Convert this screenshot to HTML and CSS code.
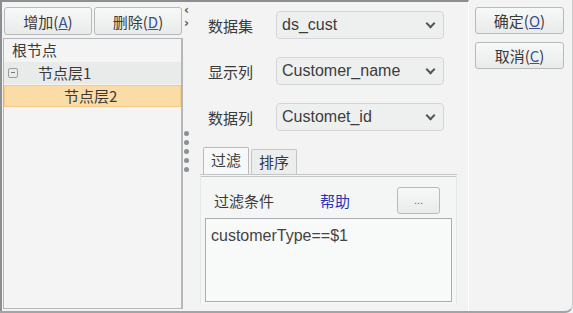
FILE: index.html
```html
<!DOCTYPE html>
<html lang="zh-CN">
<head>
  <meta charset="UTF-8">
  <title>树节点设置</title>
  <link rel="stylesheet" href="styles.css">
</head>
<body>

<div class="frame">
  <div class="main">
    <!-- 左侧：节点树 -->
    <div class="left">
      <div class="btn-row">
        <button class="btn">增加(<u>A</u>)</button>
        <button class="btn">删除(<u>D</u>)</button>
      </div>
      <div class="tree">
        <div class="node root">根节点</div>
        <div class="node level1"><span class="toggle"></span>节点层1</div>
        <div class="node level2 selected">节点层2</div>
      </div>
    </div>

    <!-- 分隔条 -->
    <div class="splitter">
      <div class="arrows">
        <span>‹</span>
        <span>›</span>
      </div>
      <div class="grip">
        <i></i><i></i><i></i><i></i><i></i>
      </div>
    </div>

    <!-- 中间：属性 -->
    <div class="form">
      <div class="field">
        <label>数据集</label>
        <div class="select">ds_cust</div>
      </div>
      <div class="field">
        <label>显示列</label>
        <div class="select">Customer_name</div>
      </div>
      <div class="field">
        <label>数据列</label>
        <div class="select">Customet_id</div>
      </div>

      <div class="tabs">
        <div class="tab active">过滤</div>
        <div class="tab">排序</div>
      </div>
      <div class="tab-pane">
        <div class="filter-bar">
          <span class="filter-label">过滤条件</span>
          <a class="help">帮助</a>
          <button class="btn small">...</button>
        </div>
        <div class="textarea">customerType==$1</div>
      </div>
    </div>
  </div>

  <!-- 右侧：确定/取消 -->
  <div class="side">
    <button class="btn">确定(<u>O</u>)</button>
    <button class="btn">取消(<u>C</u>)</button>
  </div>
</div>

</body>
</html>
```

FILE: styles.css
```css
/* Global */
html, body {
  margin: 0;
  padding: 0;
}

body {
  width: 573px;
  height: 313px;
  overflow: hidden;
  background: #f2f3f2;
  font-family: "Noto Sans CJK SC", "Noto Sans", sans-serif;
  font-size: 15px;
  color: #3a3a3a;
}

.frame {
  display: flex;
  box-sizing: border-box;
  height: 313px;
  border-bottom: 2px solid #a2a5a8;
  border-right: 1px solid #c6c8ca;
  border-bottom-right-radius: 8px;
  background: #f2f3f2;
}

.main {
  display: flex;
  width: 466px;
  border-top: 2px solid #8c8f92;
  border-left: 2px solid #8c8f92;
  border-right: 1px solid #ffffff;
}

/* Buttons */
.btn {
  box-sizing: border-box;
  height: 28px;
  padding: 0;
  border: 1px solid #b6babd;
  border-radius: 3px;
  background: linear-gradient(#f7f8f8, #e9ebeb);
  font-family: "Noto Sans CJK SC", "Noto Sans", sans-serif;
  font-size: 15px;
  color: #3a3a3a;
}

.btn u {
  color: #3d5196;
  text-decoration-color: #3d5196;
}

/* Left tree */
.left {
  width: 180px;
  margin-left: 1px;
  padding-top: 5px;
  display: flex;
  flex-direction: column;
}

.btn-row {
  display: flex;
  gap: 2px;
  padding-left: 1px;
}

.btn-row .btn {
  width: 88px;
}

.tree {
  flex: 1;
  margin-top: 3px;
  margin-bottom: 2px;
  border: 1px solid #b4b8bb;
  border-right-width: 2px;
  background: #f3f4f3;
}

.node {
  box-sizing: border-box;
  height: 22px;
  line-height: 22px;
  margin-bottom: 1px;
  white-space: nowrap;
}

.root {
  padding-left: 8px;
}

.level1 {
  display: flex;
  align-items: center;
  background: #e9eaea;
  padding-left: 4px;
}

.toggle {
  box-sizing: border-box;
  width: 10px;
  height: 10px;
  border: 1px solid #9a9d9f;
  border-radius: 2px;
  margin-right: 20px;
  position: relative;
}

.toggle::after {
  content: "";
  position: absolute;
  left: 2px;
  right: 2px;
  top: 3px;
  height: 1px;
  background: #777;
}

.level2 {
  padding-left: 59px;
  background: #fcdca6;
  border: 1px solid #f6c984;
  line-height: 20px;
}

/* Splitter */
.splitter {
  width: 12px;
  display: flex;
  flex-direction: column;
  align-items: flex-start;
  padding-left: 1px;
  box-sizing: border-box;
}

.arrows {
  display: flex;
  flex-direction: column;
  margin-top: 2px;
  font-size: 12px;
  line-height: 13px;
  font-weight: bold;
  color: #55585a;
  font-family: "DejaVu Sans", sans-serif;
}

.grip {
  margin-top: 101px;
  display: flex;
  flex-direction: column;
  gap: 4px;
}

.grip i {
  width: 5px;
  height: 5px;
  border-radius: 50%;
  background: #8d9092;
}

/* Form */
.form {
  flex: 1;
  padding-top: 9px;
  padding-left: 5px;
}

.field {
  display: flex;
  align-items: center;
  height: 28px;
  margin-bottom: 18px;
  padding-left: 8px;
}

.field label {
  width: 68px;
}

.select {
  box-sizing: border-box;
  width: 168px;
  height: 28px;
  line-height: 26px;
  padding-left: 5px;
  border: 1px solid #d3d6d8;
  border-radius: 4px;
  background: #eef0f0;
  font-family: "Liberation Sans", sans-serif;
  font-size: 16px;
  color: #3c3c3c;
  position: relative;
}

.select::after {
  content: "";
  position: absolute;
  right: 9px;
  top: 8px;
  width: 5px;
  height: 5px;
  border-right: 2px solid #555;
  border-bottom: 2px solid #555;
  transform: rotate(45deg);
}

/* Tabs */
.tabs {
  display: flex;
  gap: 2px;
  margin-top: -2px;
  padding-left: 3px;
  align-items: flex-end;
}

.tab {
  box-sizing: border-box;
  width: 46px;
  height: 25px;
  line-height: 23px;
  text-align: center;
  border: 1px solid #c4c7ca;
  border-bottom: none;
  background: #eceeee;
  border-radius: 2px 2px 0 0;
}

.tab.active {
  height: 27px;
  background: #f7f8f8;
  border-color: #b8bbbe;
}

.tab-pane {
  box-sizing: border-box;
  width: 257px;
  height: 130px;
  border-top: 3px double #c3c6c9;
  border-left: 1px solid #e6e8e8;
  border-right: 1px solid #e6e8e8;
  background: #f4f5f5;
  padding: 0 4px;
}

.filter-bar {
  display: flex;
  align-items: center;
  height: 28px;
  margin-top: 9px;
  padding-left: 9px;
}

.filter-label {
  width: 106px;
}

.help {
  color: #2b33b5;
  width: 77px;
}

.btn.small {
  width: 43px;
  height: 27px;
  font-family: "Liberation Sans", sans-serif;
  font-size: 11px;
  color: #667;
}

.textarea {
  box-sizing: border-box;
  height: 84px;
  margin-top: 4px;
  border: 1px solid #aaaeb2;
  background: #f8f9f9;
  padding: 8px 5px;
  font-family: "Liberation Sans", sans-serif;
  font-size: 16px;
  color: #444;
}

/* Right side */
.side {
  flex: 1;
  display: flex;
  flex-direction: column;
  gap: 8px;
  padding: 7px 0 0 6px;
}

.side .btn {
  width: 89px;
  height: 27px;
}
```
